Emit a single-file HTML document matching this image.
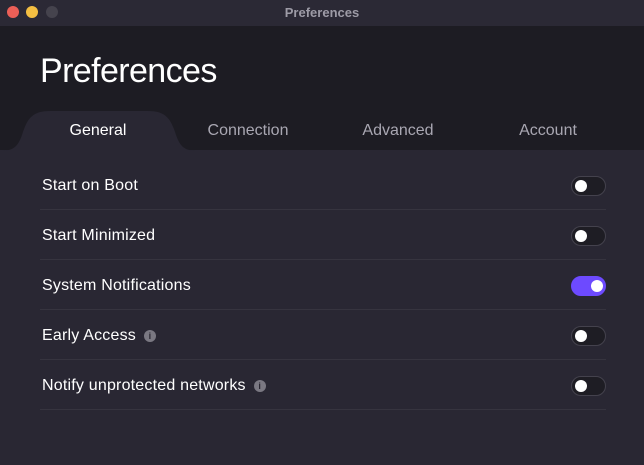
<!DOCTYPE html>
<html><head><style>
*{margin:0;padding:0;box-sizing:border-box}
body{width:644px;height:465px;overflow:hidden;background:#292733;font-family:"Liberation Sans",sans-serif;position:relative}
.tb{position:absolute;left:0;top:0;width:644px;height:26px;background:#2b2935;}
.tb .t{position:absolute;top:5px;width:644px;text-align:center;color:#9d9ba6;font-size:13px;font-weight:bold}
.dot{position:absolute;top:6px;width:12px;height:12px;border-radius:50%}
.hd{position:absolute;left:0;top:26px;width:644px;height:124px;background:#1d1c23}
h1{position:absolute;left:40px;top:52px;font-size:34px;font-weight:normal;color:#fff;letter-spacing:-0.6px}
.tab{position:absolute;top:122px;font-size:16px;color:#a9a7b2;text-align:center;width:150px}
.row{position:absolute;left:40px;width:566px;height:50px;border-bottom:1px solid #36343f}
.row span{position:absolute;left:2px;top:17px;color:#fff;font-size:16px;letter-spacing:0.2px}
.i{display:inline-block;width:12px;height:12px;border-radius:50%;background:#7a7882;color:#2a2833;font-size:9px;font-weight:bold;font-style:normal;text-align:center;line-height:12px;vertical-align:1px;margin-left:8px}
.tg{position:absolute;right:0;top:16px;width:35px;height:20px;border-radius:10px;background:#1e1d24;border:1px solid #44424d}
.tg::after{content:"";position:absolute;left:3px;top:3px;width:12px;height:12px;border-radius:50%;background:#fff}
.tg.on{background:#6d4aff;border-color:#6d4aff}
.tg.on::after{left:19px}
</style></head><body>
<div class="tb"><div class="dot" style="left:7px;background:#ec5f57"></div><div class="dot" style="left:26px;background:#f4bf42"></div><div class="dot" style="left:46px;background:#45434d"></div><div class="t">Preferences</div></div>
<div class="hd"></div>
<svg style="position:absolute;left:0;top:110px" width="200" height="41"><path d="M0 41 C14 41 18 36 22 25 C27 9 32 1 50 1 L148 1 C166 1 171 9 176 25 C180 36 184 41 198 41 Z" fill="#292733"/></svg>
<h1>Preferences</h1>
<div class="tab" style="left:23px;color:#fff">General</div>
<div class="tab" style="left:173px">Connection</div>
<div class="tab" style="left:323px">Advanced</div>
<div class="tab" style="left:473px">Account</div>
<div class="row" style="top:160px"><span>Start on Boot</span><div class="tg"></div></div>
<div class="row" style="top:210px"><span>Start Minimized</span><div class="tg"></div></div>
<div class="row" style="top:260px"><span>System Notifications</span><div class="tg on"></div></div>
<div class="row" style="top:310px"><span>Early Access<i class="i">i</i></span><div class="tg"></div></div>
<div class="row" style="top:360px"><span>Notify unprotected networks<i class="i">i</i></span><div class="tg"></div></div>
</body></html>
